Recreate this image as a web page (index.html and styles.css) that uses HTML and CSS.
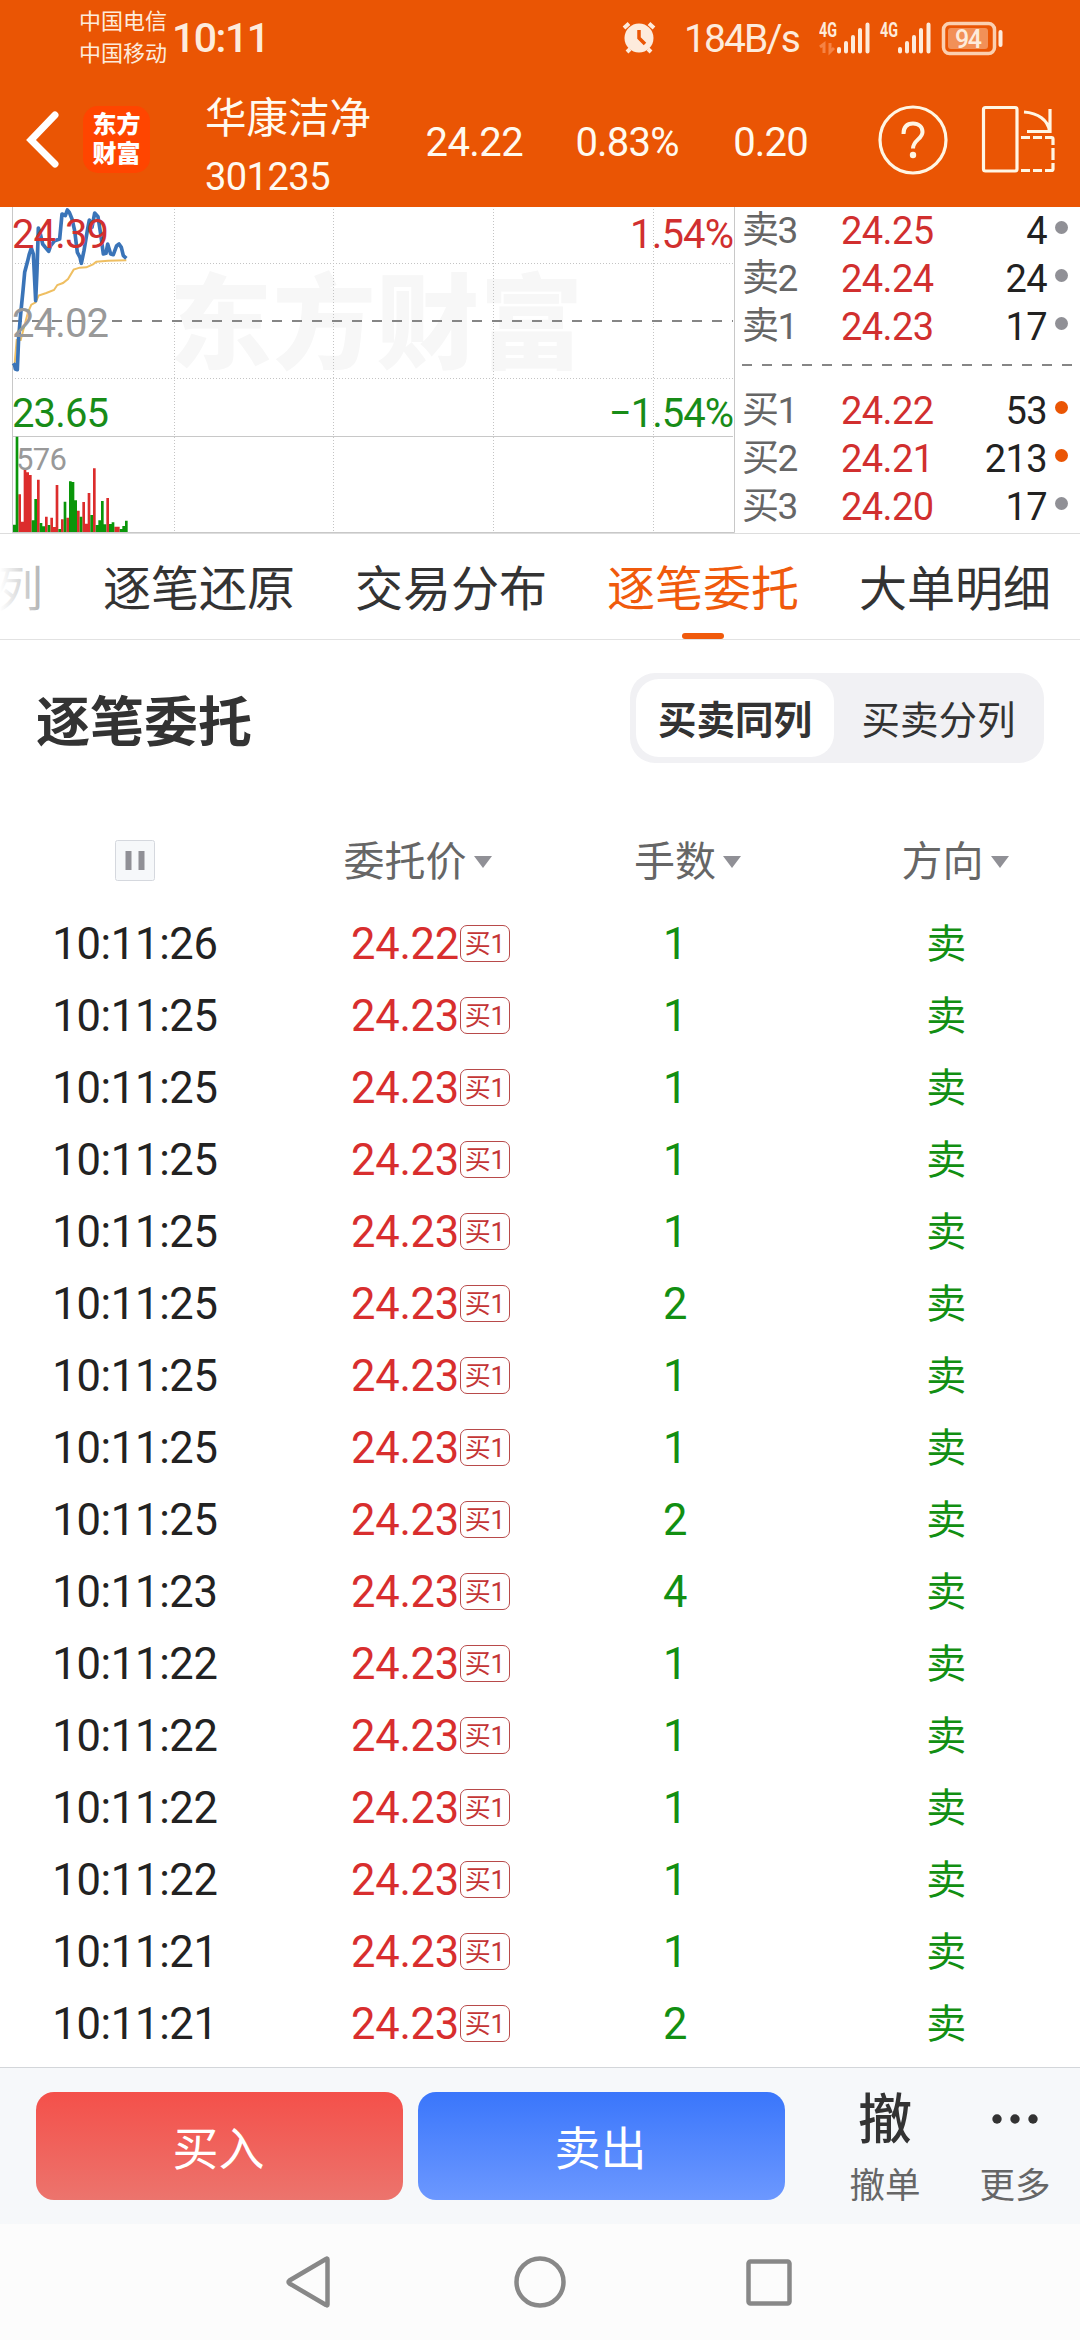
FILE: index.html
```html
<!DOCTYPE html>
<html lang="zh-CN">
<head>
	<meta charset="utf-8">
	<title>华康洁净 301235</title>
	<meta content="width=device-width, initial-scale=1" name="viewport">
	<link rel="stylesheet" href="styles.css">
</head>
<body>
<header>
	<div class="status-bar">
		<div class="carriers">
			<span>中国电信</span>
			<span>中国移动</span>
		</div>
		<span class="clock">10:11</span>
		<svg class="alarm" height="34" viewBox="0 0 34 34" width="34">
			<circle cx="17" cy="17" r="14.5"></circle>
			<path class="ear" d="M2 7 L7 2.5 M32 7 L27 2.5 M5 31 L8 28 M29 31 L26 28"></path>
			<path class="hand" d="M17 9 V17 L23 23"></path>
		</svg>
		<span class="speed">184B/s</span>
		<svg class="signals" height="36" viewBox="818 18 188 36" width="188">
			<text x="818" y="35" textLength="18" lengthAdjust="spacingAndGlyphs">4G</text>
			<path class="data" d="M819 45 L823 42 V51 M833 46 L829 50 V41"></path>
			<path class="bars" d="M838 47 V49.5 M845 41 V49.5 M852 35 V49.5 M859 28 V49.5 M866.500 22.500 V49.500"></path>
			<text x="879" y="35" textLength="18" lengthAdjust="spacingAndGlyphs">4G</text>
			<path class="bars" d="M899 47 V49.5 M906 41 V49.5 M913 35 V49.5 M920 28 V49.5 M927.500 22.500 V49.500"></path>
			<rect class="shell" x="942.500" y="21.500" width="51" height="30" rx="6"></rect>
			<rect class="charge" x="947" y="26" width="40" height="21" rx="3"></rect>
			<path class="bars" d="M999.500 30 V43"></path>
			<text class="level" x="954" y="45.500" textLength="27">94</text>
		</svg>
	</div>
	<div class="stock-bar">
		<svg class="back" height="60" viewBox="0 0 36 60" width="36">
			<path d="M30 5 L6 30 L30 54"></path>
		</svg>
		<div class="logo">东方<br>财富</div>
		<div class="stock-name">
			<span class="name">华康洁净</span>
			<span class="code">301235</span>
		</div>
		<span class="quote last">24.22</span>
		<span class="quote rate">0.83%</span>
		<span class="quote change">0.20</span>
		<svg class="help" height="70" viewBox="0 0 70 70" width="70">
			<circle cx="35" cy="35" r="33"></circle>
			<path d="M25.500 29 C25.500 22 29 18.500 35 18.500 C41 18.500 44.500 22 44.500 27 C44.500 34 35 35 35 43.500"></path>
			<circle class="dot" cx="35" cy="50" r="3.200"></circle>
		</svg>
		<svg class="rotate" height="68" viewBox="981 105 74 68" width="74">
			<rect x="983.500" y="107.500" width="33.500" height="63.500" rx="2"></rect>
			<path d="M1024 112 C1038 113 1048 120 1049.500 131 M1050 109 V131.500 H1027"></path>
			<path class="dashed" d="M1021 137.500 h9 m3 0 h9 m3 0 h6.500 q1.500 0 1.500 1.500 v6 m0 3 v12 m0 3 v6 q0 1.500 -1.500 1.500 h-6.500 m-3 0 h-9 m-3 0 h-9"></path>
		</svg>
	</div>
</header>

<section class="market">
	<svg class="chart" height="326" viewBox="0 207 738 326" width="738">
		<text class="watermark" x="169" y="361" textLength="414">东方财富</text>
		<path class="grid-dots" d="M15 263.500 H733 M15 378.500 H733 M174.500 209 V532 M333.500 209 V532 M493.500 209 V532 M653.500 209 V532"></path>
		<path class="frame" d="M12.500 207 V532.500 H734.500 V207 M12.500 436.500 H733"></path>
		<path class="zero-line" d="M12 321 H733"></path>
		<g transform="translate(8 430) scale(.33333)">
			<path class="vol-up" d="M31 306V193h8V275h8V118h8V127h8V135h8V306z M87 306V149h8V306z M111 306V260h8V306z M127 306V263h8V291h8V165h8V306z M159 306V268h8V306z M175 306V263h8V306z M207 306V242h8V306z M223 306V216h8V281h8V189h8V306z M255 306V115h8V306z M295 306V204h8V306z M319 306V290h16V306z"></path>
			<path class="vol-down" d="M15 306V284h8V20h8V306z M71 306V271h8V207h8V306z M95 306V279h8V289h8V306z M119 306V285h8V306z M151 306V297h8V306z M167 306V215h8V306z M183 306V154h8V156h8V211h8V306z M215 306V260h8V306z M247 306V255h8V306z M263 306V285h8V271h8V213h8V283h8V306z M303 306V282h8V277h8V306z M335 306V297h8V288h8V272h8V306z"></path>
		</g>
		<g transform="translate(8 204) scale(.33333)">
			<path class="average" d="M20 478 L26 408 38 408 48 370 60 325 70 302 83 295 92 275 115 267 138 258 148 243 165 237 180 225 197 197 215 191 235 190 255 181 265 173 300 170 355 169"></path>
			<path class="price" d="M16 478 L20 484 22 495 28 497 32 400 38 330 45 260 50 205 58 175 64 150 70 132 76 150 83 290 87 200 91 72 96 85 104 120 112 130 122 142 128 125 140 110 155 105 162 30 172 35 178 18 184 25 192 45 200 80 208 145 216 160 220 178 228 140 238 80 244 48 252 70 260 27 270 38 278 90 286 150 294 148 299 120 308 150 316 152 326 125 333 120 340 130 346 155 355 163"></path>
		</g>
		<text class="up" x="12" y="248" textLength="97">24.39</text>
		<text class="flat" x="12" y="337" textLength="97">24.02</text>
		<text class="down" x="12" y="426.500" textLength="97">23.65</text>
		<text class="up" x="630" y="248" textLength="104">1.54%</text>
		<text class="down" x="609" y="426.500" textLength="125">−1.54%</text>
		<text class="volume" x="16" y="469.500" textLength="51">576</text>
	</svg>
	<div class="order-book">
		<div class="level-row"><span>卖3</span><b>24.25</b><i>4</i><em></em></div>
		<div class="level-row"><span>卖2</span><b>24.24</b><i>24</i><em></em></div>
		<div class="level-row"><span>卖1</span><b>24.23</b><i>17</i><em></em></div>
		<svg class="spread" height="36" viewBox="0 0 332 36" width="332"><path d="M0 14 H332"></path></svg>
		<div class="level-row"><span>买1</span><b>24.22</b><i>53</i><em class="hot"></em></div>
		<div class="level-row"><span>买2</span><b>24.21</b><i>213</i><em class="hot"></em></div>
		<div class="level-row"><span>买3</span><b>24.20</b><i>17</i><em></em></div>
	</div>
</section>

<nav class="tabs">
	<a class="leaving">列</a>
	<a>逐笔还原</a>
	<a>交易分布</a>
	<a class="active">逐笔委托</a>
	<a>大单明细</a>
</nav>

<main>
	<div class="title-bar">
		<h1>逐笔委托</h1>
		<div class="segment">
			<span class="selected">买卖同列</span>
			<span>买卖分列</span>
		</div>
	</div>
	<div class="row head">
		<div><svg class="pause" height="42" viewBox="0 0 42 42" width="42">
			<rect x="1.500" y="1.500" width="39" height="40" rx="2"></rect>
			<path d="M14.500 12 V31 M27.500 12 V31"></path>
		</svg></div>
		<div><span class="sort">委托价</span></div>
		<div><span class="sort">手数</span></div>
		<div><span class="sort direction">方向</span></div>
	</div>
	<div class="row"><div>10:11:26</div><div class="order">24.22<small>买1</small></div><div class="sell">1</div><div class="sell side">卖</div></div>
	<div class="row"><div>10:11:25</div><div class="order">24.23<small>买1</small></div><div class="sell">1</div><div class="sell side">卖</div></div>
	<div class="row"><div>10:11:25</div><div class="order">24.23<small>买1</small></div><div class="sell">1</div><div class="sell side">卖</div></div>
	<div class="row"><div>10:11:25</div><div class="order">24.23<small>买1</small></div><div class="sell">1</div><div class="sell side">卖</div></div>
	<div class="row"><div>10:11:25</div><div class="order">24.23<small>买1</small></div><div class="sell">1</div><div class="sell side">卖</div></div>
	<div class="row"><div>10:11:25</div><div class="order">24.23<small>买1</small></div><div class="sell">2</div><div class="sell side">卖</div></div>
	<div class="row"><div>10:11:25</div><div class="order">24.23<small>买1</small></div><div class="sell">1</div><div class="sell side">卖</div></div>
	<div class="row"><div>10:11:25</div><div class="order">24.23<small>买1</small></div><div class="sell">1</div><div class="sell side">卖</div></div>
	<div class="row"><div>10:11:25</div><div class="order">24.23<small>买1</small></div><div class="sell">2</div><div class="sell side">卖</div></div>
	<div class="row"><div>10:11:23</div><div class="order">24.23<small>买1</small></div><div class="sell">4</div><div class="sell side">卖</div></div>
	<div class="row"><div>10:11:22</div><div class="order">24.23<small>买1</small></div><div class="sell">1</div><div class="sell side">卖</div></div>
	<div class="row"><div>10:11:22</div><div class="order">24.23<small>买1</small></div><div class="sell">1</div><div class="sell side">卖</div></div>
	<div class="row"><div>10:11:22</div><div class="order">24.23<small>买1</small></div><div class="sell">1</div><div class="sell side">卖</div></div>
	<div class="row"><div>10:11:22</div><div class="order">24.23<small>买1</small></div><div class="sell">1</div><div class="sell side">卖</div></div>
	<div class="row"><div>10:11:21</div><div class="order">24.23<small>买1</small></div><div class="sell">1</div><div class="sell side">卖</div></div>
	<div class="row"><div>10:11:21</div><div class="order">24.23<small>买1</small></div><div class="sell">2</div><div class="sell side">卖</div></div>
</main>

<footer>
	<div class="trade-bar">
		<button class="buy">买入</button>
		<button class="sell-out">卖出</button>
		<div class="action cancel"><strong>撤</strong><span>撤单</span></div>
		<div class="action more">
			<svg height="54" viewBox="0 0 54 54" width="54">
				<circle cx="9" cy="27" r="4.700"></circle>
				<circle cx="27" cy="27" r="4.700"></circle>
				<circle cx="45" cy="27" r="4.700"></circle>
			</svg>
			<span>更多</span>
		</div>
	</div>
	<div class="system-nav">
		<svg height="56" viewBox="0 0 56 56" width="56"><path d="M44.500 5.500 V50.500 Q44.500 52 43 51 L6.500 29.500 Q4.500 28 6.500 26.500 L43 5 Q44.500 4 44.500 5.500 Z"></path></svg>
		<svg height="56" viewBox="0 0 56 56" width="56"><circle cx="28" cy="28" r="23.500"></circle></svg>
		<svg height="56" viewBox="0 0 56 56" width="56"><rect x="7.500" y="7.500" width="41" height="42" rx="2"></rect></svg>
	</div>
</footer>
</body>
</html>
```
FILE: styles.css
```css
* {
	box-sizing: border-box;
}

body {
	margin: 0;
	width: 1080px;
	height: 2340px;
	display: flex;
	flex-direction: column;
	overflow: hidden;
	background: #fff;
	color: #222;
	font-family: Roboto, "Noto Sans CJK SC", sans-serif;
}

svg {
	display: block;
	flex: none;
	fill: none;
}

/* header */
header {
	height: 207px;
	background: #ea5504;
	color: #fffaf0;
	white-space: nowrap;
}

.status-bar {
	height: 75px;
	padding-left: 79px;
	display: flex;
	align-items: center;
	color: #fdebdc;
}

.carriers {
	width: 93px;
	display: flex;
	flex-direction: column;
	font-size: 22px;
	line-height: 32px;
}

.clock {
	width: 450px;
	padding-top: 1px;
	font-size: 41px;
	font-weight: 500;
	letter-spacing: -1.5px;
}

.alarm circle {
	fill: #fdebdc;
}

.alarm .ear {
	stroke: #fdebdc;
	stroke-width: 4;
}

.alarm .hand {
	stroke: #ea5504;
	stroke-width: 3.5;
}

.speed {
	width: 135px;
	margin-left: 28px;
	padding-top: 2px;
	font-size: 39px;
	letter-spacing: -1.9px;
}

.signals text {
	fill: #fdebdc;
	font-size: 20px;
	font-weight: 700;
}

.signals .level {
	font-size: 25px;
	font-weight: 500;
}

.signals .bars {
	stroke: #fdebdc;
	stroke-width: 4;
	stroke-linecap: round;
}

.signals .data {
	stroke: #f58345;
	stroke-width: 3;
}

.signals .shell {
	stroke: #fbcfb0;
	stroke-width: 3.5;
}

.signals .charge {
	fill: #f29058;
}

.stock-bar {
	height: 132px;
	padding: 0 25px 0 25px;
	display: flex;
	align-items: flex-start;
}

.back {
	margin-top: 35px;
}

.back path {
	stroke: #fff;
	stroke-width: 7;
	stroke-linecap: round;
}

.logo {
	width: 67px;
	height: 67px;
	margin: 31px 55px 0 22px;
	padding-top: 5px;
	border-radius: 15px;
	background: #ff4500;
	color: #fff;
	font-size: 24px;
	font-weight: 900;
	line-height: 29px;
	text-align: center;
}

.stock-name {
	width: 221px;
	padding-top: 16px;
	display: flex;
	flex-direction: column;
}

.name {
	font-size: 41.500px;
	line-height: 56px;
}

.code {
	font-size: 38px;
	line-height: 60px;
	letter-spacing: -.5px;
}

.quote {
	padding-top: 40px;
	font-size: 40px;
	line-height: 56px;
}

.last {
	width: 150px;
	letter-spacing: -.6px;
}

.rate {
	width: 158px;
	letter-spacing: -.8px;
}

.change {
	width: 145px;
	letter-spacing: -.8px;
}

.help {
	margin-top: 30px;
}

.help circle,
.help path,
.rotate rect,
.rotate path {
	stroke: #fff6e4;
	stroke-width: 3.2;
}

.help path {
	stroke-width: 4;
}

.help .dot {
	fill: #fff6e4;
	stroke: none;
}

.rotate {
	margin: 30px 0 0 33px;
}

/* chart and order book */
.market {
	height: 327px;
	display: flex;
	border-bottom: 1px solid #ddd;
}

.chart text {
	font-size: 40px;
}

.chart .watermark {
	fill: #f7f7f7;
	font-size: 103px;
	font-weight: 900;
}

.chart .up {
	fill: #d12f2f;
}

.chart .down {
	fill: #188c18;
}

.chart .flat {
	fill: #999;
}

.chart .volume {
	fill: #999;
	font-size: 31px;
}

.grid-dots {
	stroke: #c4c4c4;
	stroke-dasharray: 1 2;
}

.frame {
	stroke: #c8c8c8;
}

.zero-line {
	stroke: #868686;
	stroke-width: 2;
	stroke-dasharray: 10 10;
}

.vol-up {
	fill: #dc2c2c;
}

.vol-down {
	fill: #0a960a;
}

.average {
	stroke: #efbf62;
	stroke-width: 6;
}

.price {
	stroke: #3a74b8;
	stroke-width: 11;
	stroke-linejoin: round;
}

.order-book {
	flex: 1;
	padding-left: 4px;
}

.level-row {
	height: 48px;
	display: grid;
	grid-template-columns: 99px 110px 96px 1fr;
	font-size: 38px;
	line-height: 48px;
	letter-spacing: -.6px;
}

.level-row span {
	color: #666;
	font-size: 37px;
	letter-spacing: -1.5px;
	white-space: nowrap;
}

.level-row b {
	color: #d12f2f;
	font-weight: 400;
}

.level-row i {
	font-style: normal;
	text-align: right;
}

.level-row em {
	width: 13px;
	height: 13px;
	margin: 14px 0 0 8px;
	border-radius: 50%;
	background: #909096;
}

.level-row .hot {
	background: #ea5504;
}

.spread path {
	stroke: #868686;
	stroke-width: 2;
	stroke-dasharray: 10 10;
}

/* tabs */
.tabs {
	position: relative;
	height: 106px;
	display: flex;
	justify-content: flex-end;
	gap: 60px;
	padding-right: 29px;
	border-bottom: 1px solid #e2e2e2;
	color: #333;
	font-size: 48px;
	line-height: 111px;
	white-space: nowrap;
}

.tabs::before {
	content: "";
	position: absolute;
	z-index: 1;
	left: 0;
	width: 110px;
	height: 100px;
	background: linear-gradient(90deg, #fff, rgba(255, 255, 255, 0));
}

.tabs .leaving {
	width: 42px;
	display: flex;
	justify-content: flex-end;
}

.tabs .active {
	position: relative;
	color: #f05a0c;
}

.tabs .active::after {
	content: "";
	position: absolute;
	left: 75px;
	top: 99px;
	width: 42px;
	height: 6px;
	border-radius: 3px;
	background: #f05a0c;
}

/* order list */
main {
	height: 1427px;
}

.title-bar {
	height: 176px;
	padding: 33px 36px 0;
	display: flex;
	justify-content: space-between;
	color: #333;
}

h1 {
	margin: 0;
	font-size: 54px;
	line-height: 101px;
}

.segment {
	width: 414px;
	height: 90px;
	padding: 6px;
	display: flex;
	border-radius: 25px;
	background: #f1f1f4;
	font-size: 38.500px;
	line-height: 84px;
	text-align: center;
}

.segment span {
	flex: 1;
	padding-left: 5px;
}

.segment .selected {
	flex: none;
	width: 198px;
	height: 78px;
	padding-left: 0;
	border-radius: 23px;
	background: #fff;
	font-weight: 700;
}

.row {
	height: 72px;
	display: grid;
	grid-template-columns: repeat(4, 1fr);
	justify-items: center;
	font-size: 43.500px;
	line-height: 74px;
	letter-spacing: -.3px;
}

.head {
	height: 92px;
	align-items: center;
	color: #666;
	font-size: 41px;
	line-height: 92px;
	letter-spacing: 0;
}

.pause {
	margin-bottom: 5px;
}

.pause rect {
	fill: #f6f8fa;
	stroke: #d5d8de;
}

.pause path {
	stroke: #909096;
	stroke-width: 6;
}

.sort,
.order {
	position: relative;
}

.direction {
	margin-right: 5px;
}

.sort::after {
	content: "";
	position: absolute;
	left: 100%;
	top: 18px;
	margin-left: 7px;
	border: 9px solid transparent;
	border-top: 12px solid #909096;
	border-bottom: 0;
}

.order {
	color: #d82e2e;
}

.order small {
	position: absolute;
	left: 100%;
	top: 17px;
	width: 50px;
	height: 37px;
	margin-left: 1px;
	border: 1px solid #b84a4a;
	border-radius: 7px;
	color: #c43636;
	font-size: 26px;
	line-height: 36px;
	text-align: center;
}

.sell {
	color: #128f12;
}

.side {
	padding-left: 2px;
	font-size: 40px;
}

/* bottom bars */
.trade-bar {
	height: 157px;
	padding: 24px 0 0 36px;
	display: flex;
	border-top: 1px solid #d3d6da;
	background: #f6f8fa;
}

button {
	width: 367px;
	height: 108px;
	margin-right: 15px;
	padding: 0 2px 3px 0;
	border: none;
	border-radius: 18px;
	color: #fff;
	font: 46px Roboto, "Noto Sans CJK SC", sans-serif;
}

.buy {
	background: linear-gradient(#f4504a, #ec746d);
}

.sell-out {
	background: linear-gradient(#3a76fb, #6c98ff);
}

.action {
	width: 130px;
	display: flex;
	flex-direction: column;
	align-items: center;
	color: #666;
	font-size: 35.500px;
	line-height: 57px;
}

.cancel {
	margin-left: 20px;
}

.action strong {
	height: 66px;
	color: #333;
	font-size: 54px;
	font-weight: 500;
}

.more svg {
	height: 54px;
	margin-bottom: 12px;
	fill: #333;
}

.system-nav {
	height: 116px;
	padding: 30px 283px 0;
	display: flex;
	justify-content: space-between;
	background: #fcfcfc;
}

.system-nav svg {
	stroke: #888;
	stroke-width: 4.5;
}
```
